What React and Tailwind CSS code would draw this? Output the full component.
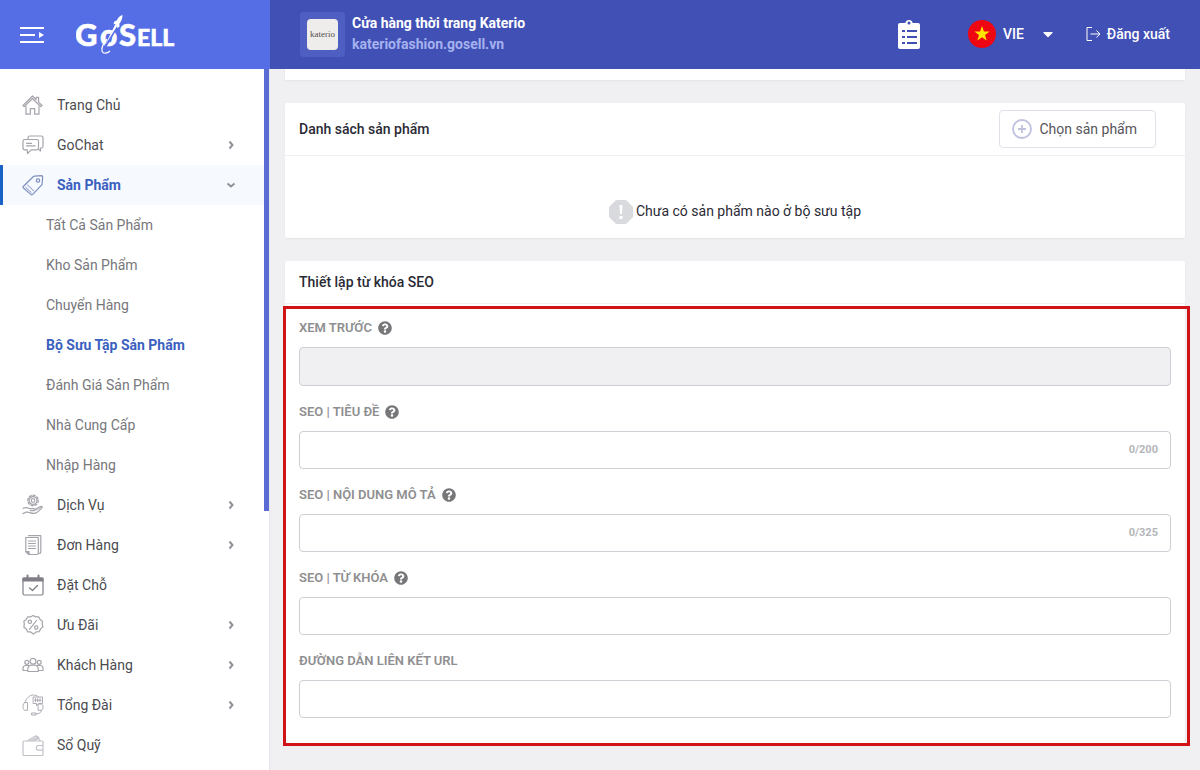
import { FaQuestionCircle, FaCaretDown } from 'react-icons/fa';

function MenuIcon({ active, children }) {
  return (
    <svg
      viewBox="0 0 22 22"
      fill="none"
      strokeWidth="1.2"
      strokeLinecap="round"
      strokeLinejoin="round"
      aria-hidden="true"
      className={
        active
          ? 'size-[22px] shrink-0 stroke-[#7f8fc0]'
          : 'size-[22px] shrink-0 stroke-[#a6a3ab]'
      }
    >
      {children}
    </svg>
  );
}

const icons = {
  home: (
    <>
      <path d="M1 11.5 10.5 2l3.6 3.6V3.4h2.5v4.7l3.4 3.4-1.2 1.2-8.3-8.2-8.3 8.2z" />
      <path d="M4 12.5v7.7h4.3v-5.5h4.4v5.5H17v-7.7" />
    </>
  ),
  chat: (
    <>
      <path d="M6 5.2V3.8C6 2.8 6.7 2 7.700 2h11.600c1 0 1.700.8 1.700 1.800v8.400c0 1-.7 1.800-1.700 1.800h-.8v3l-1.900-1.600" />
      <path d="M2.700 5.500h12.100c1 0 1.700.7 1.700 1.700v6.900c0 1-.7 1.700-1.700 1.700H9.200l-3.700 3.700-.3-3.700H2.700c-1 0-1.700-.7-1.700-1.700V7.200c0-1 .7-1.700 1.700-1.700Z" />
      <path d="M4.600 9.300h5M4.600 11.900h8.500" />
    </>
  ),
  tag: (
    <>
      <path d="m1.500 12.300 9.700-9.600c.4-.4.8-.6 1.300-.6l6.900-.4c.8 0 1.300.5 1.300 1.300l-.6 6.900c0 .5-.2.9-.6 1.300l-8.800 9.200c-.6.6-1.300.6-1.900 0L1.500 14c-.6-.5-.6-1.200 0-1.700Z" />
      <circle cx="16" cy="6.500" r="1.700" />
      <path d="m5.500 11 6 5.700M3.700 13.300l5.500 5.200" strokeWidth="1" />
    </>
  ),
  service: (
    <>
      <circle cx="11" cy="6.500" r="1.800" />
      <circle cx="11" cy="6.500" r="3.900" />
      <circle cx="11" cy="6.500" r="5.200" strokeDasharray="2 2" strokeWidth="1.400" />
      <path d="M1 14.200c2.800-1.200 4.600-.8 6.600.5h4.200c1.600 0 1.500 2 0 2H8.300M13 15.500l5-2.800c1.500-.8 3-.1 1.800 1.200-2.700 3-4.600 5.500-8 5.500-4 0-4.500-2-8-1.200L1 19.600" />
      <path d="m14 16.200 5.500-3" strokeWidth="0.8" />
    </>
  ),
  order: (
    <>
      <path d="M6.500 1.700h12.300v15.800c0 1.200-.6 2-1.800 2" />
      <path d="M3.800 3.500h12.500v15.300c0 1-.5 1.700-1.500 1.700H7l-3.200-3z" />
      <path d="M3.800 17.500H7v3z" className="fill-[#a6a3ab]" />
      <path d="M6.500 7h7M6.500 9.500h7M6.500 12h7M6.500 14.500h7" />
    </>
  ),
  booking: (
    <g className="stroke-[#817e88]">
      <rect x="1" y="4" width="20" height="17" rx="1.5" />
      <path d="M1 4h20v3H1z" className="fill-[#817e88]" />
      <path d="M5.500 1.500v4M16.500 1.500v4" strokeWidth="2" />
      <path d="m7.500 14 3 2.500 5-5" strokeWidth="1.3" />
    </g>
  ),
  promo: (
    <>
      <path d="m11 1.500 2.700 1.400 3-.1 1.400 2.700 2.300 1.700-.1 2.900.5 2.900-2.300 1.900-1.200 2.700-3 .2-2.800 2.300-2.900-2.200-3-.1-1.300-2.800-2.400-1.800.4-3-.4-2.900 2.400-1.900L5.600 2.800l3 .1z" />
      <circle cx="7.800" cy="7.800" r="1.700" />
      <circle cx="14.200" cy="13.600" r="1.700" />
      <path d="m14.500 6.500-7 8.800" />
    </>
  ),
  customers: (
    <>
      <circle cx="11" cy="7.300" r="2.900" />
      <circle cx="4.800" cy="8.300" r="2" />
      <circle cx="17.200" cy="8.300" r="2" />
      <path d="M5.800 17.500v-2.300c0-2.500 1.800-4 3.600-4h3.200c1.800 0 3.600 1.500 3.600 4v2.300zM5.500 16.500H1v-2c0-1.800 1.300-3 2.800-3h3M16.500 16.500H21v-2c0-1.800-1.300-3-2.800-3h-3" />
    </>
  ),
  callcenter: (
    <g strokeWidth="0.9">
      <path d="M3 8.500C4.200 4.500 7.300 1 11.500 1c2 0 3.500.6 5 1.700" />
      <path d="M11.500 3h9v6.500h-4l-2 2.300V9.500h-3zM13.500 4.700v3M15.700 4.700v3M18 4.700v3M12.500 6.200h6.500" />
      <path d="M3 8.500h2.500v7.800H3c-2.700 0-2.700-7.800 0-7.800ZM16.500 10h2.700c2.500.5 2.500 6 0 6.300h-2.700z" />
      <path d="M19.500 16.500c-.5 2.500-2.500 3.300-5.500 3.300M10 19h4v2h-4z" />
    </g>
  ),
  wallet: (
    <g className="stroke-[#c3c1c8]">
      <path d="M1.500 7H20c.6 0 1 .4 1 1v3.500h-5c-2.200 0-2.200 4.700 0 4.700h5v4.300c0 .6-.4 1-1 1H2c-.6 0-1-.4-1-1V7.500M21 11.500v4.700" />
      <path d="m5.500 6.700 8.500-5 1.500 2M8.500 6.700 16 2.700l2 4M11.500 6.700l5-2.300" />
    </g>
  ),
};

const menuItems = [
  { icon: 'home', label: 'Trang Chủ' },
  { icon: 'chat', label: 'GoChat', expandable: true },
  {
    icon: 'tag',
    label: 'Sản Phẩm',
    expandable: true,
    active: true,
    children: [
      { label: 'Tất Cả Sản Phẩm' },
      { label: 'Kho Sản Phẩm' },
      { label: 'Chuyển Hàng' },
      { label: 'Bộ Sưu Tập Sản Phẩm', active: true },
      { label: 'Đánh Giá Sản Phẩm' },
      { label: 'Nhà Cung Cấp' },
      { label: 'Nhập Hàng' },
    ],
  },
  { icon: 'service', label: 'Dịch Vụ', expandable: true },
  { icon: 'order', label: 'Đơn Hàng', expandable: true },
  { icon: 'booking', label: 'Đặt Chỗ' },
  { icon: 'promo', label: 'Ưu Đãi', expandable: true },
  { icon: 'customers', label: 'Khách Hàng', expandable: true },
  { icon: 'callcenter', label: 'Tổng Đài', expandable: true },
  { icon: 'wallet', label: 'Sổ Quỹ' },
];

const seoFields = [
  { id: 'seo-preview', label: 'XEM TRƯỚC', help: true, disabled: true },
  { id: 'seo-title', label: 'SEO | TIÊU ĐỀ', help: true, max: 200 },
  { id: 'seo-description', label: 'SEO | NỘI DUNG MÔ TẢ', help: true, max: 325 },
  { id: 'seo-keywords', label: 'SEO | TỪ KHÓA', help: true },
  { id: 'seo-url', label: 'ĐƯỜNG DẪN LIÊN KẾT URL' },
];

function Chevron({ open }) {
  return (
    <svg
      viewBox="0 0 10 10"
      fill="none"
      strokeWidth="2"
      aria-hidden="true"
      className="mr-0.5 size-2.5 stroke-[#918f98]"
    >
      <path d={open ? 'm1.5 3.5 3.5 3 3.5-3' : 'm3.5 1.5 3 3.5-3 3.5'} />
    </svg>
  );
}

function Logo() {
  return (
    <svg
      viewBox="0 0 104 44"
      className="h-11 w-[104px] fill-white stroke-white font-['Lato',sans-serif] font-black"
      strokeWidth="0.5"
      role="img"
      aria-label="GoSell"
    >
      <text x="-1" y="33" fontSize="31">G</text>
      <text x="24" y="33" fontSize="30">o</text>
      <text x="43" y="33" fontSize="31">S</text>
      <text x="61" y="33" fontSize="23">ELL</text>
      {/* Rocket */}
      <path d="M40.500 14 29.500 33" fill="none" className="stroke-[#556ee6]" strokeWidth="2.5" />
      <path
        stroke="none"
        d="M46.500 2c-2.700.9-4.700 2.600-5.500 5.200l-2.700 1.200-.8 2.800 2-.3-11 22 12.500-19.700.5 2 2-1.800-.1-2.700c2-2.300 3.300-5.800 3.100-8.700Z"
      />
      <path
        d="M31 26c-4.500 5.500-6 9.500-4.800 12.500 1.200 2.700 4.800 2 7.800-.5"
        fill="none"
        strokeWidth="1.2"
      />
    </svg>
  );
}

function Header() {
  return (
    <header className="flex h-[69px] shrink-0 text-white">
      <div className="flex w-[270px] shrink-0 items-center gap-8 bg-[#556ee6] pl-5">
        <button type="button" aria-label="Menu">
          <svg viewBox="0 0 24 18" className="h-[18px] w-6 fill-white">
            <path d="M0 1h24v2H0zM0 8h15v2H0zM0 15h24v2H0zM19 6l5 3-5 3z" />
          </svg>
        </button>
        <Logo />
      </div>

      <div className="flex min-w-0 flex-1 items-center justify-between bg-[#4050b4] px-[30px]">
        <div className="flex items-center gap-[7px]">
          <div className="flex size-[45px] items-center justify-center rounded bg-[#4f5fc1]">
            <div className="flex size-[31px] items-center justify-center rounded-sm bg-[#efedec] font-['Liberation_Serif',serif] text-[9px] text-[#55504d]">
              katerio
            </div>
          </div>
          <div className="pb-0.5 text-sm leading-[21px] font-bold">
            <p>Cửa hàng thời trang Katerio</p>
            <a href="#store" className="block text-[#a6b2ef]">
              kateriofashion.gosell.vn
            </a>
          </div>
        </div>

        <div className="flex items-center pb-0.5 text-sm font-medium">
          <button type="button" aria-label="Danh sách công việc" className="mr-12">
            <svg viewBox="0 0 22 30" className="h-[30px] w-[22px]">
              <path
                className="fill-white"
                d="M2 4h5.300a3.800 3.800 0 0 1 7.400 0H20a2 2 0 0 1 2 2v22a2 2 0 0 1-2 2H2a2 2 0 0 1-2-2V6a2 2 0 0 1 2-2Z"
              />
              <circle cx="11" cy="4" r="1.5" className="fill-[#4050b4]" />
              <path
                className="stroke-[#4050b4]"
                strokeWidth="2"
                d="M4 12h3M9 12h10M4 18h3M9 18h10M4 24h3M9 24h10"
              />
            </svg>
          </button>
          <button type="button" className="flex items-center">
            <svg viewBox="0 0 28 28" className="mr-[7px] size-7">
              <circle cx="14" cy="14" r="14" className="fill-[#ee0712]" />
              <path
                className="fill-[#ffe600]"
                d="m14 6 1.900 5.500h5.700l-4.600 3.500 1.700 5.600-4.700-3.400-4.700 3.400 1.700-5.600-4.600-3.500h5.700z"
              />
            </svg>
            VIE
            <FaCaretDown className="ml-4 size-4" />
          </button>
          <a href="#logout" className="ml-[30px] flex items-center gap-1.5">
            <svg viewBox="0 0 15 14" fill="none" stroke="currentColor" className="h-3.5 w-[15px]">
              <path d="M6 .5H1v13h5M4.500 7H14M10.500 3.500 14 7l-3.500 3.500" />
            </svg>
            Đăng xuất
          </a>
        </div>
      </div>
    </header>
  );
}

function Sidebar() {
  return (
    <aside className="flex w-[270px] shrink-0 border-r border-[#e6e6ea] bg-white">
      <nav className="flex-1 pt-4 text-sm text-[#4b4b50]">
        <ul>
          {menuItems.map((item) => (
            <li key={item.label}>
              <a
                href="#menu"
                className={
                  item.active
                    ? 'flex h-10 items-center border-l-[3px] border-[#1a62c6] bg-[#f6f9fe] pr-[26px] pl-[19px] font-bold text-[#3a60c0]'
                    : 'flex h-10 items-center pr-[26px] pl-[22px]'
                }
              >
                <MenuIcon active={item.active}>{icons[item.icon]}</MenuIcon>
                <span className="ml-[13px] flex-1">{item.label}</span>
                {item.expandable && <Chevron open={item.active} />}
              </a>
              {item.children && (
                <ul>
                  {item.children.map((child) => (
                    <li key={child.label}>
                      <a
                        href="#submenu"
                        className={
                          child.active
                            ? 'flex h-10 items-center pl-[46px] font-bold text-[#3a60c0]'
                            : 'flex h-10 items-center pl-[46px] text-[#77777b]'
                        }
                      >
                        {child.label}
                      </a>
                    </li>
                  ))}
                </ul>
              )}
            </li>
          ))}
        </ul>
      </nav>
      {/* Scroll thumb */}
      <div className="h-[442px] w-[5px] bg-[#5a6bd3]" />
    </aside>
  );
}

function SeoField({ field }) {
  return (
    <div>
      <div className="flex h-[22px] items-center gap-1.5 text-[#8f8f91]">
        <label htmlFor={field.id} className="pt-px text-[13px] font-semibold">
          {field.label}
        </label>
        {field.help && <FaQuestionCircle className="size-3.5 text-[#77777a]" />}
      </div>
      <div
        className={
          field.disabled
            ? 'mt-2 flex h-[39px] items-center rounded border border-[#cdcfd4] bg-[#f0f0f2]'
            : 'mt-2 flex h-[38px] items-center rounded border border-[#cdcfd4] bg-white'
        }
      >
        <input
          id={field.id}
          type="text"
          disabled={field.disabled}
          className="h-full min-w-0 flex-1 bg-transparent px-3 text-sm outline-none"
        />
        {field.max && (
          <span className="pr-3 text-[11px] font-bold text-[#b4b5ba]">0/{field.max}</span>
        )}
      </div>
    </div>
  );
}

export default function App() {
  return (
    <div className="flex h-screen flex-col overflow-hidden bg-[#f0f0f2] font-['Roboto',sans-serif]">
      <Header />

      <div className="flex min-h-0 flex-1">
        <Sidebar />

        <main className="min-w-0 flex-1 px-[15px] text-sm text-[#2a2a35]">
          <section className="h-[11px] bg-white shadow-xs" />

          {/* Product list */}
          <section className="mt-[23px] rounded-xs bg-white shadow-xs">
            <div className="flex h-[53px] items-center justify-between border-b border-[#eef0f3] pr-[29px] pl-3.5">
              <h2 className="font-medium">Danh sách sản phẩm</h2>
              <button
                type="button"
                className="flex h-[38px] items-center gap-[7px] rounded border border-[#e0e2ea] pr-[18px] pl-3 text-[#55555a]"
              >
                <svg
                  viewBox="0 0 20 20"
                  fill="none"
                  strokeWidth="1.8"
                  className="size-5 stroke-[#bfc1df]"
                >
                  <circle cx="10" cy="10" r="9" />
                  <path d="M10 6v8M6 10h8" />
                </svg>
                Chọn sản phẩm
              </button>
            </div>
            <div className="flex h-[82px] items-end justify-center gap-[3px] pb-3.5">
              <svg viewBox="0 0 24 24" className="size-6">
                <path className="fill-[#d9dadd]" d="M7 0h10l7 7v10l-7 7H7l-7-7V7z" />
                <path className="fill-white" d="M10.500 5h3l-.5 9h-2zM10.500 16h3v3h-3z" />
              </svg>
              <p className="leading-[26px]">Chưa có sản phẩm nào ở bộ sưu tập</p>
            </div>
          </section>

          {/* SEO settings */}
          <section className="mt-[23px] rounded-xs bg-white shadow-xs">
            <div className="flex h-[43px] items-center border-b border-[#eef0f3] px-3.5">
              <h2 className="font-medium">Thiết lập từ khóa SEO</h2>
            </div>
            <div className="relative flex flex-col gap-[15px] px-3.5 pt-[13px] pb-[27px]">
              {seoFields.map((field) => (
                <SeoField key={field.id} field={field} />
              ))}
              <div className="pointer-events-none absolute top-0.5 -right-[5px] -bottom-px -left-0.5 border-3 border-[#d01316]" />
            </div>
          </section>
        </main>
      </div>
    </div>
  );
}
